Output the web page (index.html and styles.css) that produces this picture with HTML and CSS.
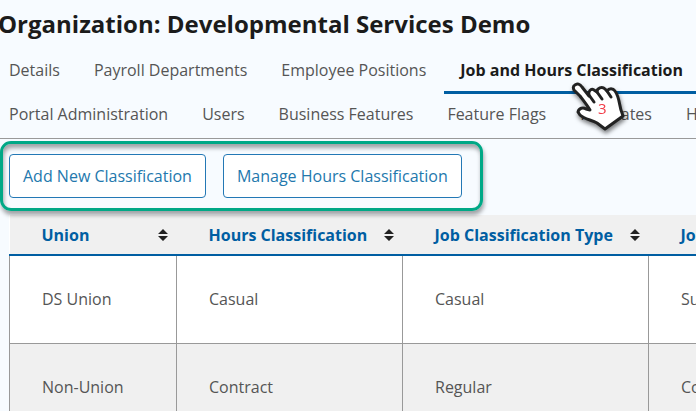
FILE: index.html
```html
<!DOCTYPE html>
<html lang="en">
<head>
    <meta charset="UTF-8">
    <meta name="viewport" content="width=device-width, initial-scale=1.0">
    <title>Organization: Developmental Services Demo</title>
    <link rel="stylesheet" href="styles.css">
</head>
<body>
    <h1>Organization: Developmental Services Demo</h1>

    <nav class="tabs">
        <div class="tab-row">
            <a class="tab" href="#">Details</a>
            <a class="tab" href="#">Payroll Departments</a>
            <a class="tab" href="#">Employee Positions</a>
            <a class="tab active" href="#" aria-current="page">Job and Hours Classification</a>
        </div>
        <div class="tab-row">
            <a class="tab" href="#">Portal Administration</a>
            <a class="tab" href="#">Users</a>
            <a class="tab" href="#">Business Features</a>
            <a class="tab" href="#">Feature Flags</a>
            <a class="tab" href="#">Pay Rates</a>
            <a class="tab" href="#">H</a>
        </div>
        <svg class="pointer" width="60" height="62" viewBox="0 0 60 62" aria-label="Step 3">
            <path d="M5 3C7 1 10 2 12 5L19 14C18 9 21 6 24 8L27 10C27 6 32 4 35 7L37 9C39 6 43 6 45 9C50 16 49 24 52 31L53 34L35 47L27 41C22 38 14 37 10 33L8 30C9 26 13 25 16 27L20 28C17 23 13 18 10 14L4 8C3 6 3 4 5 3Z" fill="#fff" stroke="#222" stroke-width="3" stroke-linejoin="round"/>
            <path d="M19 13L24 20M27 10L32 17M37 9L41 15" fill="none" stroke="#222" stroke-width="3" stroke-linecap="round"/>
            <text x="28" y="32" class="pointer-step">3</text>
        </svg>
    </nav>

    <main>
        <div class="actions">
            <button type="button" class="btn">Add New Classification</button>
            <button type="button" class="btn">Manage Hours Classification</button>
            <div class="highlight"></div>
        </div>

        <table>
            <colgroup>
                <col class="col-union">
                <col class="col-hours">
                <col class="col-type">
                <col>
            </colgroup>
            <thead>
                <tr>
                    <th><button type="button" class="sort">Union
                        <svg width="10" height="12" viewBox="0 0 10 12"><path d="M5 0L10 5H0ZM0 7H10L5 12Z"/></svg></button></th>
                    <th><button type="button" class="sort">Hours Classification
                        <svg width="10" height="12" viewBox="0 0 10 12"><path d="M5 0L10 5H0ZM0 7H10L5 12Z"/></svg></button></th>
                    <th><button type="button" class="sort">Job Classification Type
                        <svg width="10" height="12" viewBox="0 0 10 12"><path d="M5 0L10 5H0ZM0 7H10L5 12Z"/></svg></button></th>
                    <th><button type="button" class="sort">Jo</button></th>
                </tr>
            </thead>
            <tbody>
                <tr>
                    <td>DS Union</td>
                    <td>Casual</td>
                    <td>Casual</td>
                    <td>Su</td>
                </tr>
                <tr>
                    <td>Non-Union</td>
                    <td>Contract</td>
                    <td>Regular</td>
                    <td>Co</td>
                </tr>
            </tbody>
        </table>
    </main>
</body>
</html>
```
FILE: styles.css
```css
* {
    box-sizing: border-box;
}
body {
    margin: 0;
    overflow: hidden;
    background-color: #f7fbff;
    font-family: "Open Sans", sans-serif;
    font-size: 16px;
    line-height: 24px;
    color: #555;
}
h1 {
    margin: 0 0 0 -2px;
    padding: 6px 0 8px;
    font-size: 24px;
    font-weight: 700;
    line-height: 36px;
    color: #1b1b1b;
    white-space: nowrap;
}
.tabs {
    position: relative;
    border-bottom: 1px solid #999;
}
.tab-row {
    display: flex;
    gap: 2px;
    margin-left: -7px;
}
.tab {
    flex: none;
    padding: 8px 16px 9px;
    border-bottom: 3px solid transparent;
    color: #555;
    text-decoration: none;
    white-space: nowrap;
}
.tab.active {
    border-bottom-color: #005ea2;
    font-weight: 700;
    color: #1b1b1b;
}
.pointer {
    position: absolute;
    top: 32px;
    left: 570px;
    filter: drop-shadow(1px 3px 2px rgba(0, 0, 0, 0.5));
}
.pointer-step {
    font-size: 15px;
    fill: #f23b47;
}
main {
    padding-left: 9px;
}
.actions {
    position: relative;
    display: flex;
    gap: 17px;
    padding: 15px 0 17px;
}
.btn {
    padding: 9px 13px;
    border: 1px solid #2378b5;
    border-radius: 4px;
    background-color: #fff;
    color: #2378ad;
    font: inherit;
    white-space: nowrap;
    cursor: pointer;
}
.highlight {
    position: absolute;
    top: 2px;
    left: -9px;
    width: 483px;
    height: 70px;
    border: 3px solid #00a886;
    border-radius: 11px;
    box-shadow: 1px 4px 4px rgba(0, 0, 0, 0.35), inset 1px 4px 4px rgba(0, 0, 0, 0.35);
    pointer-events: none;
}
table {
    width: 100%;
    table-layout: fixed;
    border-collapse: collapse;
    background-color: #fff;
}
.col-union {
    width: 167px;
}
.col-hours {
    width: 226px;
}
.col-type {
    width: 246px;
}
th {
    padding: 0;
    border-bottom: 2px solid #005ea2;
    background-color: #f0f0f0;
}
.sort {
    display: flex;
    align-items: center;
    justify-content: space-between;
    width: 100%;
    padding: 8px 9px 7px 32px;
    border: none;
    background: none;
    color: #005ea2;
    font: inherit;
    font-weight: 700;
    text-align: left;
    white-space: nowrap;
    cursor: pointer;
}
.sort svg {
    fill: #222;
}
td {
    height: 88px;
    padding: 0 0 0 32px;
    border: 1px solid #999;
    overflow: hidden;
    white-space: nowrap;
}
td:last-child {
    border-right: none;
}
tbody tr:nth-child(even) {
    background-color: #f0f0f0;
}
```
